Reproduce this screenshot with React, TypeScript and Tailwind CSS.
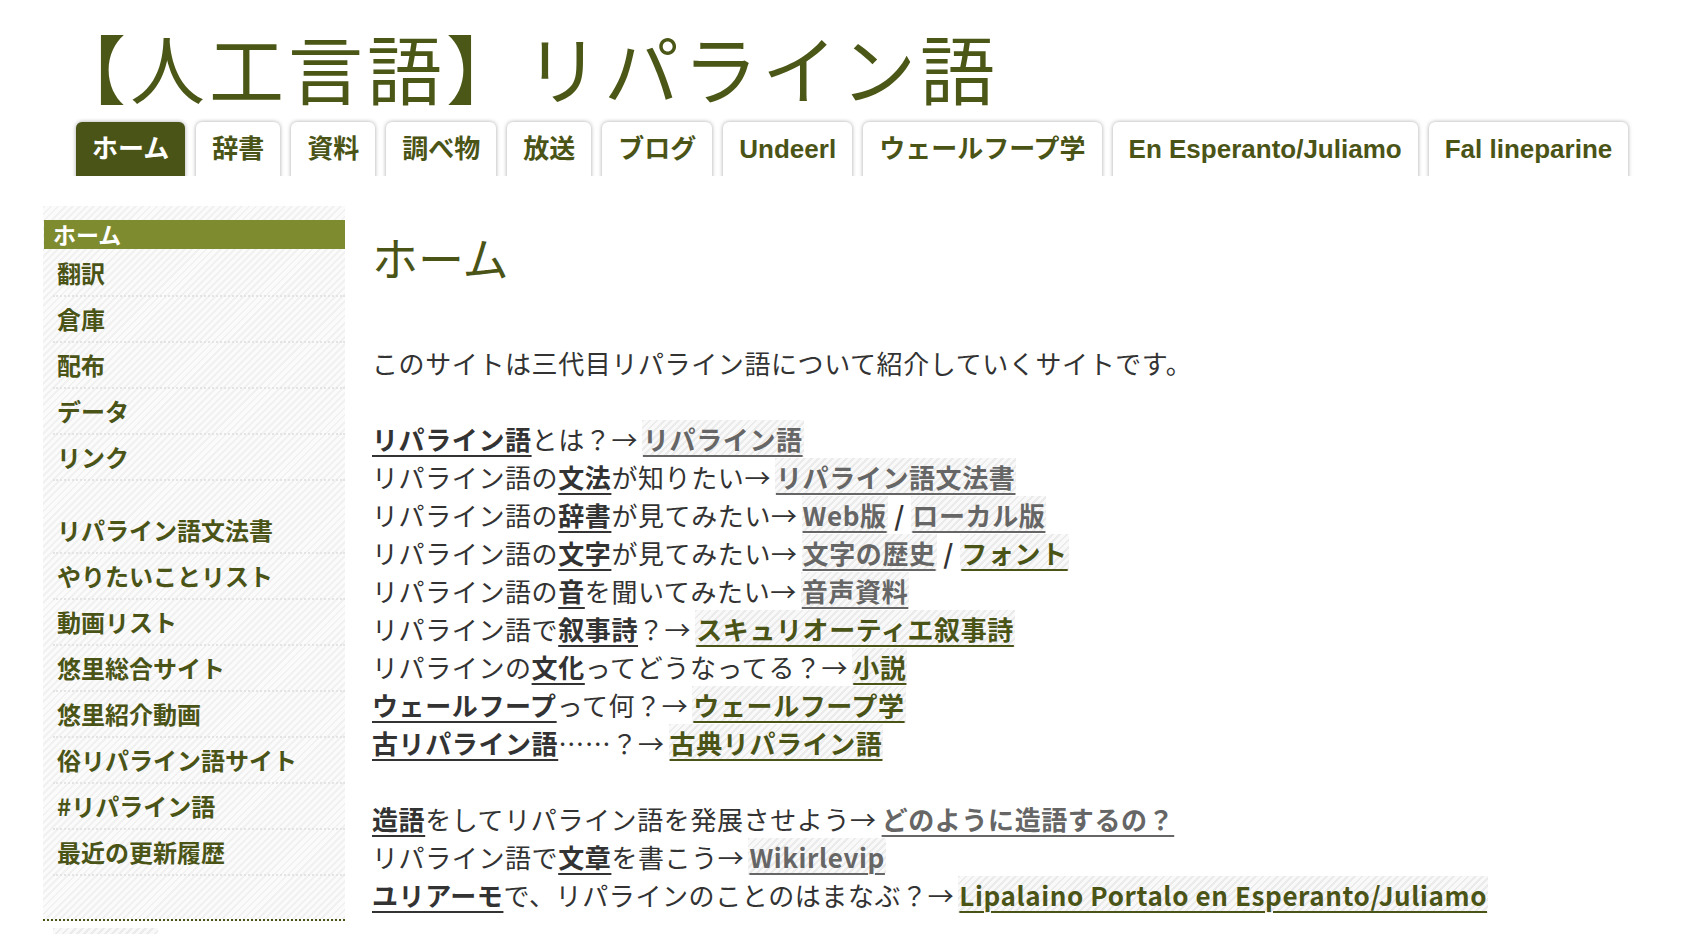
import type { ReactNode } from 'react'

const tabs = [
  { label: 'ホーム', active: true },
  { label: '辞書' },
  { label: '資料' },
  { label: '調べ物' },
  { label: '放送' },
  { label: 'ブログ' },
  { label: 'Undeerl' },
  { label: 'ウェールフープ学' },
  { label: 'En Esperanto/Juliamo' },
  { label: 'Fal lineparine' },
]

const mainMenu = ['翻訳', '倉庫', '配布', 'データ', 'リンク']
const subMenu = [
  'リパライン語文法書',
  'やりたいことリスト',
  '動画リスト',
  '悠里総合サイト',
  '悠里紹介動画',
  '俗リパライン語サイト',
  '#リパライン語',
  '最近の更新履歴',
]

function Term({ children }: { children: ReactNode }) {
  return <span className="font-bold text-[#333] underline decoration-2 underline-offset-[5px]">{children}</span>
}

function Link({ children, olive, plain, tight }: { children: ReactNode; olive?: boolean; plain?: boolean; tight?: boolean }) {
  const tone = olive ? 'text-[#4b5417]' : 'text-[#666]'
  const bg = plain ? '' : 'bg-[repeating-linear-gradient(135deg,#ebebeb_0px,#ebebeb_2px,#f9f9f9_2px,#f9f9f9_5px)]'
  const gap = tight ? '' : 'ml-[4px]'
  return <span className={`${tone} ${bg} ${gap} px-[1px] font-bold underline decoration-2 underline-offset-[5px]`}>{children}</span>
}

function MenuItem({ label }: { label: string }) {
  return (
    <li className="ml-[10px] flex h-[46px] items-center border-b-2 border-dotted border-[#e4e4e4] pl-[4px] text-[24px] font-bold text-[#4b5417]">
      {label}
    </li>
  )
}

export default function App() {
  return (
    <div className="min-h-screen bg-white font-['Noto_Sans_CJK_JP',sans-serif]">
      <header className="pl-[51px] pt-[29px]">
        <h1 className="text-[75px] leading-[75px] font-normal tracking-[4px] text-[#4b5717]">【人工言語】リパライン語</h1>
      </header>

      <nav className="mt-[14px] flex h-[58px] gap-[11px] overflow-hidden pl-[76px] pt-[4px] font-['Liberation_Sans','Noto_Sans_CJK_JP',sans-serif]">
        {tabs.map((tab) => (
          <div
            key={tab.label}
            className={
              tab.active
                ? 'h-[70px] rounded-t-[6px] bg-[#4b5417] px-[16px] pt-[8px] text-[26px] font-bold text-white shadow-[0_0_4px_rgba(0,0,0,0.35)]'
                : 'h-[70px] rounded-t-[6px] bg-white px-[16px] pt-[8px] text-[26px] font-bold text-[#4b5417] shadow-[0_0_4px_rgba(0,0,0,0.35)]'
            }
          >
            {tab.label}
          </div>
        ))}
      </nav>

      <div className="mx-[43px] mt-[30px] flex gap-[27px]">
        <aside className="w-[302px] shrink-0">
          <div className="border-b-2 border-dotted border-[#4b5417] bg-[repeating-linear-gradient(135deg,#f1f1f1_0px,#f1f1f1_2px,#fbfbfb_2px,#fbfbfb_5px)] pb-[43px] pt-[14px]">
            <div className="ml-[1px] h-[29px] bg-[#7e8b2f] pl-[9px] text-[23px] font-bold leading-[29px] text-white">ホーム</div>
            <ul className="mt-[2px]">
              {mainMenu.map((m) => (
                <MenuItem key={m} label={m} />
              ))}
            </ul>
            <ul className="mt-[27px]">
              {subMenu.map((m) => (
                <MenuItem key={m} label={m} />
              ))}
            </ul>
          </div>
          <div className="ml-[10px] mt-[7px] h-[20px] w-[105px] bg-[repeating-linear-gradient(135deg,#ebebeb_0px,#ebebeb_2px,#f9f9f9_2px,#f9f9f9_5px)]" />
        </aside>

        <main className="text-[26px] leading-[38px] tracking-[0.6px] text-[#333]">
          <h2 className="mt-[23px] text-[46px] font-normal leading-[55px] tracking-normal text-[#4b5417]">ホーム</h2>
          <div className="mt-[60px]">
            <div>このサイトは三代目リパライン語について紹介していくサイトです。</div>
            <div className="h-[38px]" />
            <div>
              <Term>リパライン語</Term>とは？→<Link>リパライン語</Link>
            </div>
            <div>
              リパライン語の<Term>文法</Term>が知りたい→<Link>リパライン語文法書</Link>
            </div>
            <div>
              リパライン語の<Term>辞書</Term>が見てみたい→<Link>Web版</Link>
              <span className="font-bold"> / </span>
              <Link tight>ローカル版</Link>
            </div>
            <div>
              リパライン語の<Term>文字</Term>が見てみたい→<Link>文字の歴史</Link>
              <span className="font-bold"> / </span>
              <Link olive tight>フォント</Link>
            </div>
            <div>
              リパライン語の<Term>音</Term>を聞いてみたい→<Link>音声資料</Link>
            </div>
            <div>
              リパライン語で<Term>叙事詩</Term>？→<Link olive>スキュリオーティエ叙事詩</Link>
            </div>
            <div>
              リパラインの<Term>文化</Term>ってどうなってる？→<Link olive>小説</Link>
            </div>
            <div>
              <Term>ウェールフープ</Term>って何？→<Link olive>ウェールフープ学</Link>
            </div>
            <div>
              <Term>古リパライン語</Term>……？→<Link olive>古典リパライン語</Link>
            </div>
            <div className="h-[38px]" />
            <div>
              <Term>造語</Term>をしてリパライン語を発展させよう→<Link plain>どのように造語するの？</Link>
            </div>
            <div>
              リパライン語で<Term>文章</Term>を書こう→<Link>Wikirlevip</Link>
            </div>
            <div>
              <Term>ユリアーモ</Term>で、リパラインのことのはまなぶ？→<Link olive>Lipalaino Portalo en Esperanto/Juliamo</Link>
            </div>
          </div>
        </main>
      </div>
    </div>
  )
}
